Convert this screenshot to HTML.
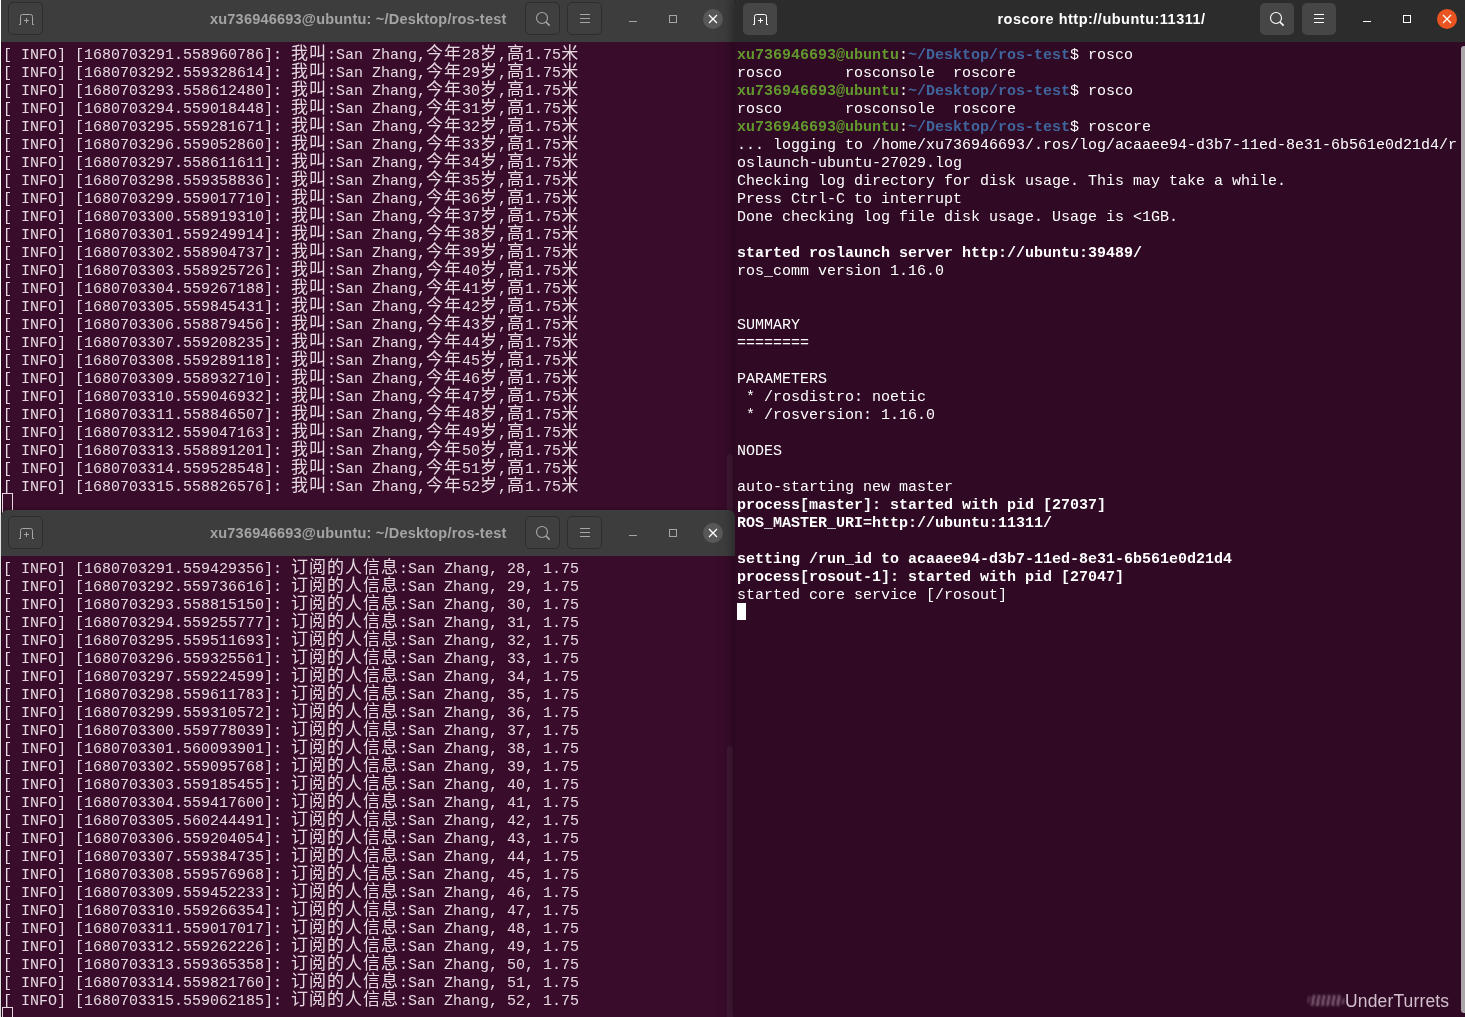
<!DOCTYPE html>
<html lang="zh"><head><meta charset="utf-8"><title>terminals</title>
<style>
html,body{margin:0;padding:0;}
body{width:1465px;height:1017px;overflow:hidden;background:#230a1b;position:relative;font-family:"Liberation Sans","Noto Sans CJK SC",sans-serif;}
.win{position:absolute;overflow:hidden;}
.tb{position:absolute;left:0;right:0;top:0;height:46px;border-radius:6px 6px 0 0;}
.in .tb{background:#3d3d3d;color:#b8b8b8;}
.ac .tb{background:#2c2c2c;color:#ffffff;}
.title{position:absolute;left:0;right:0;top:-.4px;height:46px;line-height:46px;text-align:center;font-weight:bold;font-size:14.5px;white-space:pre;will-change:transform;}
.in .title{color:#a4a4a4;left:209px;right:auto;text-align:left;letter-spacing:0.21px;}
.ac .title{letter-spacing:0.5px;}
.btn{position:absolute;top:6.3px;width:35.3px;height:33.2px;border-radius:5px;box-sizing:border-box;}
.in .btn{background:#3f3f3f;border:1px solid #2d2d2d;}
.ac .btn{background:#464646;border:0;margin-left:.7px;width:34.3px;top:6.7px;height:32.6px;}
.ic{position:absolute;left:0;top:0;}
.in .ic{color:#a6a6a6;}
.ac .ic{color:#ffffff;}
.ic .x{stroke:#ffffff;}
.cl{position:absolute;left:702px;top:13px;width:20px;height:20px;border-radius:50%;}
.in .cl{background:#585858;}
.ac .cl{background:#e95420;}
.term{position:absolute;left:0;right:0;bottom:0;top:46px;font-family:"Liberation Mono","Noto Sans CJK SC",monospace;font-size:15px;line-height:18px;}
.in .term{box-shadow:inset 1px 0 0 rgba(0,0,0,.3);background:#380c2a;color:#e6d8e0;}
.ac .term{background:#300a24;color:#ffffff;}
.lines{position:absolute;left:2px;top:3px;will-change:transform;}
.l{height:18px;line-height:22px;white-space:pre;position:relative;}
.c{font-family:"Noto Sans CJK SC","Liberation Mono",monospace;font-size:17px;letter-spacing:1px;line-height:1px;}
.g{color:#62982e;}
.b{color:#40659d;}
.cur{position:absolute;left:0;top:0;width:9px;height:18px;box-sizing:border-box;}
.in .cur{border:1px solid #e6d8e0;left:-1px;top:-2px;width:11px;height:20px;}
.ac .cur{background:#fff;height:17px;}
.sb{position:absolute;left:726px;width:7px;top:50px;bottom:4px;background:#aca6ab;border-radius:3px 0 0 3px;}
.wm{position:absolute;left:1345px;top:991px;font-size:17.5px;letter-spacing:.15px;color:#d2bfcc;line-height:20px;will-change:transform;}
.smudge{position:absolute;left:1308px;top:995px;width:36px;height:11px;filter:blur(1.2px);opacity:.55;background:repeating-linear-gradient(100deg,#e9cfe0 0 2px,transparent 2px 5px);border-radius:5px;}
.ws{position:absolute;left:0;top:0;width:1.2px;height:1017px;background:#fff;}
.th{position:absolute;width:6px;left:726px;background:rgba(255,255,255,.055);border-radius:3px 3px 0 0;}
</style></head><body>
<div class="ws"></div>

<div class="win in" id="w1" style="left:1px;top:-4px;width:734px;height:518px;">
<div class="tb">
<div class="btn" style="left:7px"></div>
<div class="btn" style="left:524.2px"></div>
<div class="btn" style="left:566.2px"></div>
<div class="cl"></div>
<svg class="ic" width="733" height="46" viewBox="0 0 733 46" fill="none" stroke="currentColor" stroke-width="1">
<path d="M18 28.5 H19.5 V20.5 Q19.5 18.5 21.5 18.5 H29.5 Q31.5 18.5 31.5 20.5 V28.5 H33"/>
<path d="M25.5 22 V27 M23 24.5 H28"/>
<circle cx="541" cy="22" r="5.5" stroke-width="1.1"/>
<path d="M545 26 L548.6 29.6" stroke-width="1.7"/>
<path d="M579 18.5 H589 M579 22.5 H589 M579 26.5 H589"/>
<path d="M628 25.5 H636"/>
<rect x="668.5" y="19.5" width="7" height="7"/>
<path class="x" d="M708 19 L716 27 M716 19 L708 27" stroke-width="1.3"/>
</svg>
<div class="title">xu736946693@ubuntu: ~/Desktop/ros-test</div>
</div>
<div class="term"><div class="lines">
<div class="l">[ INFO] [1680703291.558960786]: <span class="c">我叫</span>:San Zhang,<span class="c">今年</span>28<span class="c">岁</span>,<span class="c">高</span>1.75<span class="c">米</span></div>
<div class="l">[ INFO] [1680703292.559328614]: <span class="c">我叫</span>:San Zhang,<span class="c">今年</span>29<span class="c">岁</span>,<span class="c">高</span>1.75<span class="c">米</span></div>
<div class="l">[ INFO] [1680703293.558612480]: <span class="c">我叫</span>:San Zhang,<span class="c">今年</span>30<span class="c">岁</span>,<span class="c">高</span>1.75<span class="c">米</span></div>
<div class="l">[ INFO] [1680703294.559018448]: <span class="c">我叫</span>:San Zhang,<span class="c">今年</span>31<span class="c">岁</span>,<span class="c">高</span>1.75<span class="c">米</span></div>
<div class="l">[ INFO] [1680703295.559281671]: <span class="c">我叫</span>:San Zhang,<span class="c">今年</span>32<span class="c">岁</span>,<span class="c">高</span>1.75<span class="c">米</span></div>
<div class="l">[ INFO] [1680703296.559052860]: <span class="c">我叫</span>:San Zhang,<span class="c">今年</span>33<span class="c">岁</span>,<span class="c">高</span>1.75<span class="c">米</span></div>
<div class="l">[ INFO] [1680703297.558611611]: <span class="c">我叫</span>:San Zhang,<span class="c">今年</span>34<span class="c">岁</span>,<span class="c">高</span>1.75<span class="c">米</span></div>
<div class="l">[ INFO] [1680703298.559358836]: <span class="c">我叫</span>:San Zhang,<span class="c">今年</span>35<span class="c">岁</span>,<span class="c">高</span>1.75<span class="c">米</span></div>
<div class="l">[ INFO] [1680703299.559017710]: <span class="c">我叫</span>:San Zhang,<span class="c">今年</span>36<span class="c">岁</span>,<span class="c">高</span>1.75<span class="c">米</span></div>
<div class="l">[ INFO] [1680703300.558919310]: <span class="c">我叫</span>:San Zhang,<span class="c">今年</span>37<span class="c">岁</span>,<span class="c">高</span>1.75<span class="c">米</span></div>
<div class="l">[ INFO] [1680703301.559249914]: <span class="c">我叫</span>:San Zhang,<span class="c">今年</span>38<span class="c">岁</span>,<span class="c">高</span>1.75<span class="c">米</span></div>
<div class="l">[ INFO] [1680703302.558904737]: <span class="c">我叫</span>:San Zhang,<span class="c">今年</span>39<span class="c">岁</span>,<span class="c">高</span>1.75<span class="c">米</span></div>
<div class="l">[ INFO] [1680703303.558925726]: <span class="c">我叫</span>:San Zhang,<span class="c">今年</span>40<span class="c">岁</span>,<span class="c">高</span>1.75<span class="c">米</span></div>
<div class="l">[ INFO] [1680703304.559267188]: <span class="c">我叫</span>:San Zhang,<span class="c">今年</span>41<span class="c">岁</span>,<span class="c">高</span>1.75<span class="c">米</span></div>
<div class="l">[ INFO] [1680703305.559845431]: <span class="c">我叫</span>:San Zhang,<span class="c">今年</span>42<span class="c">岁</span>,<span class="c">高</span>1.75<span class="c">米</span></div>
<div class="l">[ INFO] [1680703306.558879456]: <span class="c">我叫</span>:San Zhang,<span class="c">今年</span>43<span class="c">岁</span>,<span class="c">高</span>1.75<span class="c">米</span></div>
<div class="l">[ INFO] [1680703307.559208235]: <span class="c">我叫</span>:San Zhang,<span class="c">今年</span>44<span class="c">岁</span>,<span class="c">高</span>1.75<span class="c">米</span></div>
<div class="l">[ INFO] [1680703308.559289118]: <span class="c">我叫</span>:San Zhang,<span class="c">今年</span>45<span class="c">岁</span>,<span class="c">高</span>1.75<span class="c">米</span></div>
<div class="l">[ INFO] [1680703309.558932710]: <span class="c">我叫</span>:San Zhang,<span class="c">今年</span>46<span class="c">岁</span>,<span class="c">高</span>1.75<span class="c">米</span></div>
<div class="l">[ INFO] [1680703310.559046932]: <span class="c">我叫</span>:San Zhang,<span class="c">今年</span>47<span class="c">岁</span>,<span class="c">高</span>1.75<span class="c">米</span></div>
<div class="l">[ INFO] [1680703311.558846507]: <span class="c">我叫</span>:San Zhang,<span class="c">今年</span>48<span class="c">岁</span>,<span class="c">高</span>1.75<span class="c">米</span></div>
<div class="l">[ INFO] [1680703312.559047163]: <span class="c">我叫</span>:San Zhang,<span class="c">今年</span>49<span class="c">岁</span>,<span class="c">高</span>1.75<span class="c">米</span></div>
<div class="l">[ INFO] [1680703313.558891201]: <span class="c">我叫</span>:San Zhang,<span class="c">今年</span>50<span class="c">岁</span>,<span class="c">高</span>1.75<span class="c">米</span></div>
<div class="l">[ INFO] [1680703314.559528548]: <span class="c">我叫</span>:San Zhang,<span class="c">今年</span>51<span class="c">岁</span>,<span class="c">高</span>1.75<span class="c">米</span></div>
<div class="l">[ INFO] [1680703315.558826576]: <span class="c">我叫</span>:San Zhang,<span class="c">今年</span>52<span class="c">岁</span>,<span class="c">高</span>1.75<span class="c">米</span></div>
<div class="l"><div class="cur"></div></div>
</div><div class="th" style="top:412px;height:70px"></div></div>
</div>

<div class="win in" id="w2" style="left:1px;top:510px;width:734px;height:507px;box-shadow:0 0 4px rgba(0,0,0,.3);border-radius:6px 6px 0 0;">
<div class="tb">
<div class="btn" style="left:7px"></div>
<div class="btn" style="left:524.2px"></div>
<div class="btn" style="left:566.2px"></div>
<div class="cl"></div>
<svg class="ic" width="733" height="46" viewBox="0 0 733 46" fill="none" stroke="currentColor" stroke-width="1">
<path d="M18 28.5 H19.5 V20.5 Q19.5 18.5 21.5 18.5 H29.5 Q31.5 18.5 31.5 20.5 V28.5 H33"/>
<path d="M25.5 22 V27 M23 24.5 H28"/>
<circle cx="541" cy="22" r="5.5" stroke-width="1.1"/>
<path d="M545 26 L548.6 29.6" stroke-width="1.7"/>
<path d="M579 18.5 H589 M579 22.5 H589 M579 26.5 H589"/>
<path d="M628 25.5 H636"/>
<rect x="668.5" y="19.5" width="7" height="7"/>
<path class="x" d="M708 19 L716 27 M716 19 L708 27" stroke-width="1.3"/>
</svg>
<div class="title">xu736946693@ubuntu: ~/Desktop/ros-test</div>
</div>
<div class="term"><div class="lines">
<div class="l">[ INFO] [1680703291.559429356]: <span class="c">订阅的人信息</span>:San Zhang, 28, 1.75</div>
<div class="l">[ INFO] [1680703292.559736616]: <span class="c">订阅的人信息</span>:San Zhang, 29, 1.75</div>
<div class="l">[ INFO] [1680703293.558815150]: <span class="c">订阅的人信息</span>:San Zhang, 30, 1.75</div>
<div class="l">[ INFO] [1680703294.559255777]: <span class="c">订阅的人信息</span>:San Zhang, 31, 1.75</div>
<div class="l">[ INFO] [1680703295.559511693]: <span class="c">订阅的人信息</span>:San Zhang, 32, 1.75</div>
<div class="l">[ INFO] [1680703296.559325561]: <span class="c">订阅的人信息</span>:San Zhang, 33, 1.75</div>
<div class="l">[ INFO] [1680703297.559224599]: <span class="c">订阅的人信息</span>:San Zhang, 34, 1.75</div>
<div class="l">[ INFO] [1680703298.559611783]: <span class="c">订阅的人信息</span>:San Zhang, 35, 1.75</div>
<div class="l">[ INFO] [1680703299.559310572]: <span class="c">订阅的人信息</span>:San Zhang, 36, 1.75</div>
<div class="l">[ INFO] [1680703300.559778039]: <span class="c">订阅的人信息</span>:San Zhang, 37, 1.75</div>
<div class="l">[ INFO] [1680703301.560093901]: <span class="c">订阅的人信息</span>:San Zhang, 38, 1.75</div>
<div class="l">[ INFO] [1680703302.559095768]: <span class="c">订阅的人信息</span>:San Zhang, 39, 1.75</div>
<div class="l">[ INFO] [1680703303.559185455]: <span class="c">订阅的人信息</span>:San Zhang, 40, 1.75</div>
<div class="l">[ INFO] [1680703304.559417600]: <span class="c">订阅的人信息</span>:San Zhang, 41, 1.75</div>
<div class="l">[ INFO] [1680703305.560244491]: <span class="c">订阅的人信息</span>:San Zhang, 42, 1.75</div>
<div class="l">[ INFO] [1680703306.559204054]: <span class="c">订阅的人信息</span>:San Zhang, 43, 1.75</div>
<div class="l">[ INFO] [1680703307.559384735]: <span class="c">订阅的人信息</span>:San Zhang, 44, 1.75</div>
<div class="l">[ INFO] [1680703308.559576968]: <span class="c">订阅的人信息</span>:San Zhang, 45, 1.75</div>
<div class="l">[ INFO] [1680703309.559452233]: <span class="c">订阅的人信息</span>:San Zhang, 46, 1.75</div>
<div class="l">[ INFO] [1680703310.559266354]: <span class="c">订阅的人信息</span>:San Zhang, 47, 1.75</div>
<div class="l">[ INFO] [1680703311.559017017]: <span class="c">订阅的人信息</span>:San Zhang, 48, 1.75</div>
<div class="l">[ INFO] [1680703312.559262226]: <span class="c">订阅的人信息</span>:San Zhang, 49, 1.75</div>
<div class="l">[ INFO] [1680703313.559365358]: <span class="c">订阅的人信息</span>:San Zhang, 50, 1.75</div>
<div class="l">[ INFO] [1680703314.559821760]: <span class="c">订阅的人信息</span>:San Zhang, 51, 1.75</div>
<div class="l">[ INFO] [1680703315.559062185]: <span class="c">订阅的人信息</span>:San Zhang, 52, 1.75</div>
<div class="l"><div class="cur"></div></div>
</div><div class="th" style="top:190px;height:300px"></div></div>
</div>

<div class="win ac" id="w3" style="left:735px;top:-4px;width:733px;height:1021px;box-shadow:0 0 13px rgba(0,0,0,.55);">
<div class="tb">
<div class="btn" style="left:7px"></div>
<div class="btn" style="left:524.2px"></div>
<div class="btn" style="left:566.2px"></div>
<div class="cl"></div>
<svg class="ic" width="733" height="46" viewBox="0 0 733 46" fill="none" stroke="currentColor" stroke-width="1">
<path d="M18 28.5 H19.5 V20.5 Q19.5 18.5 21.5 18.5 H29.5 Q31.5 18.5 31.5 20.5 V28.5 H33"/>
<path d="M25.5 22 V27 M23 24.5 H28"/>
<circle cx="541" cy="22" r="5.5" stroke-width="1.1"/>
<path d="M545 26 L548.6 29.6" stroke-width="1.7"/>
<path d="M579 18.5 H589 M579 22.5 H589 M579 26.5 H589"/>
<path d="M628 25.5 H636"/>
<rect x="668.5" y="19.5" width="7" height="7"/>
<path class="x" d="M708 19 L716 27 M716 19 L708 27" stroke-width="1.3"/>
</svg>
<div class="title">roscore http://ubuntu:11311/</div>
</div>
<div class="term"><div class="lines">
<div class="l"><b class="g">xu736946693@ubuntu</b>:<b class="b">~/Desktop/ros-test</b>$ rosco</div>
<div class="l">rosco       rosconsole  roscore</div>
<div class="l"><b class="g">xu736946693@ubuntu</b>:<b class="b">~/Desktop/ros-test</b>$ rosco</div>
<div class="l">rosco       rosconsole  roscore</div>
<div class="l"><b class="g">xu736946693@ubuntu</b>:<b class="b">~/Desktop/ros-test</b>$ roscore</div>
<div class="l">... logging to /home/xu736946693/.ros/log/acaaee94-d3b7-11ed-8e31-6b561e0d21d4/r</div>
<div class="l">oslaunch-ubuntu-27029.log</div>
<div class="l">Checking log directory for disk usage. This may take a while.</div>
<div class="l">Press Ctrl-C to interrupt</div>
<div class="l">Done checking log file disk usage. Usage is &lt;1GB.</div>
<div class="l">&nbsp;</div>
<div class="l"><b>started roslaunch server http://ubuntu:39489/</b></div>
<div class="l">ros_comm version 1.16.0</div>
<div class="l">&nbsp;</div>
<div class="l">&nbsp;</div>
<div class="l">SUMMARY</div>
<div class="l">========</div>
<div class="l">&nbsp;</div>
<div class="l">PARAMETERS</div>
<div class="l"> * /rosdistro: noetic</div>
<div class="l"> * /rosversion: 1.16.0</div>
<div class="l">&nbsp;</div>
<div class="l">NODES</div>
<div class="l">&nbsp;</div>
<div class="l">auto-starting new master</div>
<div class="l"><b>process[master]: started with pid [27037]</b></div>
<div class="l"><b>ROS_MASTER_URI=http://ubuntu:11311/</b></div>
<div class="l">&nbsp;</div>
<div class="l"><b>setting /run_id to acaaee94-d3b7-11ed-8e31-6b561e0d21d4</b></div>
<div class="l"><b>process[rosout-1]: started with pid [27047]</b></div>
<div class="l">started core service [/rosout]</div>
<div class="l"><div class="cur"></div></div>
</div></div>
<div class="sb"></div>
</div>

<div class="smudge"></div>
<div class="wm">UnderTurrets</div>
</body></html>
